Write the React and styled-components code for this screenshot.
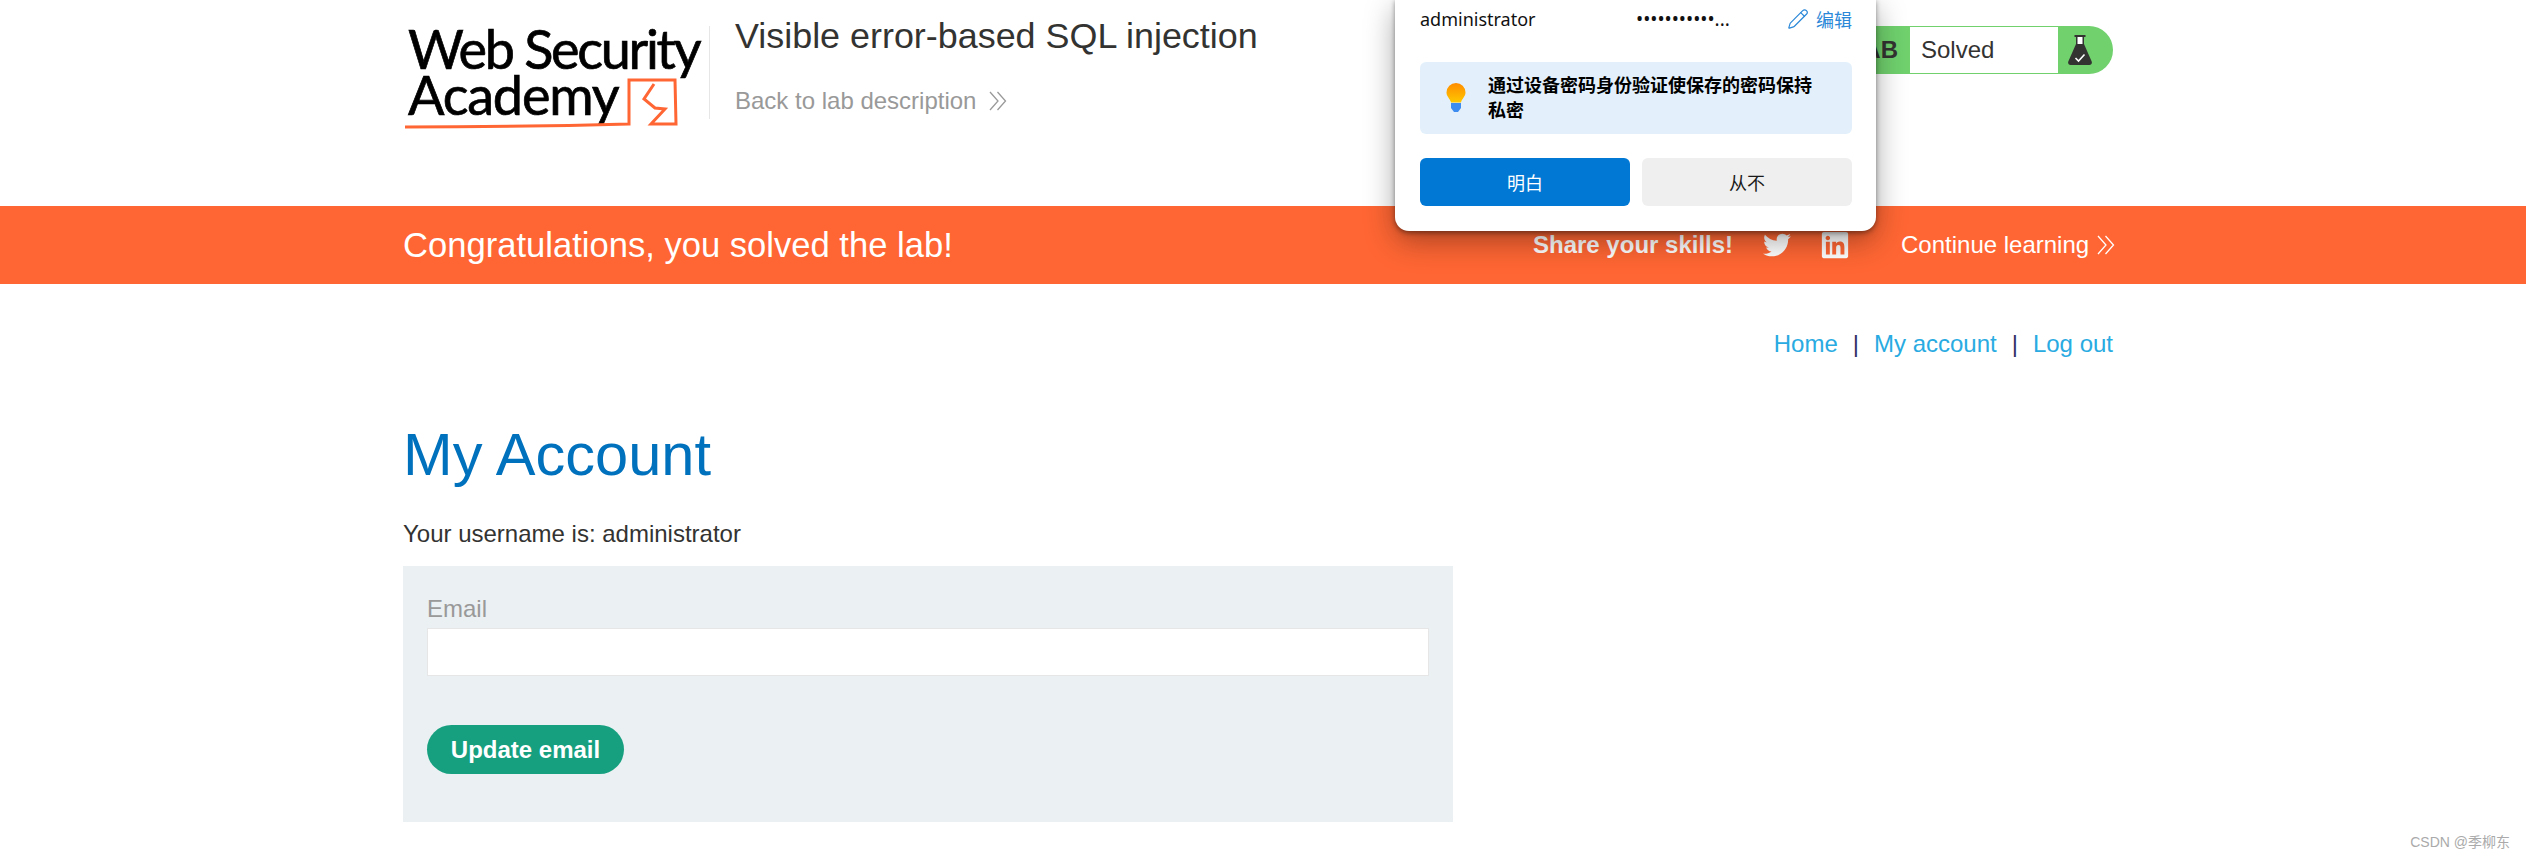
import React from "react";
import styled, { createGlobalStyle } from "styled-components";
import { Pencil } from "lucide-react";
import { FaTwitter, FaLinkedin } from "react-icons/fa";

const GlobalStyle = createGlobalStyle`
  html, body {
    margin: 0;
    padding: 0;
    background: #fff;
    overflow: hidden;
  }
  body {
    font-family: "Liberation Sans", Arial, sans-serif;
    color: #333332;
  }
`;

const Page = styled.div`
  position: relative;
  width: 2526px;
  height: 859px;
  overflow: hidden;
`;

const Header = styled.header`
  display: flex;
  align-items: flex-start;
  width: 1710px;
  height: 206px;
  margin-left: 403px;
  box-sizing: border-box;
`;

const Logo = styled.div`
  position: relative;
  width: 306px;
  height: 93px;
  margin-top: 26px;
  border-right: 1px solid #e6e6e6;
  font-family: "Lato", sans-serif;
  color: #000;
`;

const LogoLine = styled.div`
  padding-left: ${props => props.$indent}px;
  font-size: ${props => props.$size}px;
  line-height: 46px;
  height: 46px;
  font-weight: 400;
  letter-spacing: ${props => props.$spacing}px;
  -webkit-text-stroke: 0.7px #000;
  white-space: nowrap;
`;

const LogoMark = styled.svg`
  position: absolute;
  left: 1px;
  top: 49px;
  width: 280px;
  height: 56px;
`;

const TitleBlock = styled.div`
  margin-left: 25px;
  padding-top: 15px;
`;

const LabTitle = styled.h2`
  margin: 0;
  font-size: 35.9px;
  line-height: 42px;
  font-weight: 400;
  color: #333332;
`;

const BackLink = styled.a`
  display: flex;
  align-items: center;
  gap: 13px;
  margin-top: 29px;
  font-size: 24px;
  line-height: 30px;
  color: #999;
`;

const StatusPill = styled.div`
  display: flex;
  align-items: center;
  margin-left: auto;
  margin-top: 26px;
  height: 48px;
  background: #70d16d;
  border-radius: 0 24px 24px 0;
`;

const StatusLabel = styled.span`
  padding: 0 12px 0 14px;
  font-size: 24px;
  font-weight: 700;
  color: #333332;
`;

const StatusValue = styled.div`
  display: flex;
  align-items: center;
  box-sizing: border-box;
  width: 148px;
  height: 46px;
  padding-left: 11px;
  background: #fff;
  font-size: 24px;
  color: #333332;
`;

const FlaskBox = styled.div`
  display: flex;
  align-items: center;
  width: 55px;
  padding-left: 10px;
  box-sizing: border-box;
`;

const Banner = styled.section`
  display: flex;
  align-items: center;
  box-sizing: border-box;
  width: 100%;
  height: 78px;
  padding-left: 403px;
  background: #ff6633;
  color: #fff;
`;

const BannerTitle = styled.h4`
  margin: 0;
  width: 1130px;
  font-size: 34.6px;
  font-weight: 400;
`;

const Share = styled.div`
  display: flex;
  align-items: center;
  width: 368px;
  font-size: 24px;
  font-weight: 700;
`;

const SocialIcon = styled.span`
  display: flex;
  margin-left: ${props => props.$gap}px;
  font-size: ${props => props.$size}px;
`;

const ContinueLink = styled.a`
  display: flex;
  align-items: center;
  gap: 8px;
  font-size: 24px;
  color: #fff;
`;

const Main = styled.main`
  width: 1710px;
  margin-left: 403px;
`;

const TopNav = styled.nav`
  display: flex;
  justify-content: flex-end;
  align-items: center;
  gap: 15px;
  height: 30px;
  margin-top: 45px;
  font-size: 24px;
`;

const NavLink = styled.a`
  color: #29abe2;
`;

const NavSep = styled.span`
  color: #333366;
`;

const Heading = styled.h1`
  margin: 61px 0 0;
  font-size: 59.6px;
  line-height: 70px;
  font-weight: 400;
  color: #0071bc;
`;

const Username = styled.p`
  margin: 29px 0 0;
  font-size: 24px;
  line-height: 30px;
  color: #333332;
`;

const FormBox = styled.form`
  box-sizing: border-box;
  width: 1050px;
  height: 256px;
  margin-top: 17px;
  padding: 29px 24px 0;
  background: #ebf0f2;
`;

const FieldLabel = styled.label`
  display: block;
  font-size: 24px;
  line-height: 27px;
  color: #999;
`;

const TextInput = styled.input`
  display: block;
  box-sizing: border-box;
  width: 100%;
  height: 48px;
  margin: 6px 0 49px;
  border: 1px solid #e6e6e6;
  background: #fff;
  outline: none;
`;

const SubmitButton = styled.button`
  display: block;
  width: 197px;
  height: 49px;
  border: 0;
  border-radius: 25px;
  background: #16a07f;
  color: #fff;
  font-family: "Liberation Sans", Arial, sans-serif;
  font-size: 24px;
  font-weight: 700;
`;

const Popup = styled.div`
  position: absolute;
  left: 1395px;
  top: -1px;
  box-sizing: border-box;
  width: 481px;
  height: 232px;
  padding: 1px 24px 0 25px;
  background: #fff;
  border-radius: 0 0 14px 14px;
  box-shadow: 0 2px 5px rgba(0, 0, 0, 0.4), 0 10px 30px rgba(0, 0, 0, 0.35);
  font-family: "Noto Sans", "Noto Sans CJK SC", sans-serif;
  color: #111;
`;

const CredentialRow = styled.div`
  display: flex;
  align-items: center;
  height: 38px;
  font-size: 18px;
`;

const CredentialName = styled.span`
  width: 216px;
`;

const CredentialDots = styled.span`
  width: 150px;
  font-size: 19px;
  letter-spacing: 0;
`;

const EditLink = styled.a`
  display: flex;
  align-items: center;
  gap: 7px;
  margin-left: auto;
  color: #2b88d8;
  font-size: 18px;
`;

const InfoBox = styled.div`
  display: flex;
  align-items: center;
  box-sizing: border-box;
  height: 72px;
  margin-top: 24px;
  padding: 0 12px 0 26px;
  background: #e3f0fb;
  border-radius: 6px;
`;

const InfoText = styled.p`
  width: 330px;
  margin: 0 0 0 22px;
  font-size: 18px;
  line-height: 25px;
  font-weight: 700;
  color: #000;
`;

const ButtonRow = styled.div`
  display: grid;
  grid-template-columns: 1fr 1fr;
  gap: 12px;
  margin-top: 24px;
`;

const PopupButton = styled.button`
  height: 48px;
  border: 0;
  border-radius: 6px;
  background: ${props => (props.$primary ? "#0078d4" : "#efefef")};
  color: ${props => (props.$primary ? "#fff" : "#1a1a1a")};
  font-family: "Noto Sans CJK SC", sans-serif;
  font-size: 18px;
`;

const Watermark = styled.div`
  position: absolute;
  right: 16px;
  bottom: 8px;
  font-family: "Liberation Sans", "Noto Sans CJK SC", sans-serif;
  font-size: 14px;
  color: #aaa;
`;

function DoubleChevron({ size = 18 }) {
  return (
    <svg width={size} height={size + 2} viewBox="0 0 18 20" fill="none" stroke="currentColor" strokeWidth="1.3">
      <path d="M1 1l8 9-8 9" />
      <path d="M8.500 1l8 9-8 9" />
    </svg>
  );
}

function FlaskIcon() {
  return (
    <svg width="24" height="30" viewBox="0 0 24 30">
      <path d="M6.500 0h11v2H16v7l7.700 17.500c.7 1.700-.5 3.500-2.200 3.500h-19C.8 30-.4 28.200.3 26.500L8 9V2H6.500z" fill="#333332" />
      <path d="M9.500 2h5v7h-5z" fill="#fff" />
      <path d="M7.500 23l3 3 6-6.500" fill="none" stroke="#fff" strokeWidth="1.600" />
    </svg>
  );
}

function BulbIcon() {
  return (
    <svg width="20" height="30" viewBox="0 0 20 30">
      <defs>
        <linearGradient id="bulbFill" x1="0" y1="0" x2="0" y2="1">
          <stop offset="0" stopColor="#ff8c00" />
          <stop offset="1" stopColor="#ffc800" />
        </linearGradient>
      </defs>
      <path d="M10 0a9.500 9.500 0 0 1 9.500 9.500c0 4-3.500 6-4.500 10H5c-1-4-4.500-6-4.500-10A9.500 9.500 0 0 1 10 0z" fill="url(#bulbFill)" />
      <path d="M5 20h10v5l-3 4H8l-3-4z" fill="#3f8cf0" />
    </svg>
  );
}

export default function App() {
  return (
    <Page>
      <GlobalStyle />
      <Header>
        <Logo>
          <LogoLine $size={54} $spacing={-2.3} $indent={5}>Web Security</LogoLine>
          <LogoLine $size={54} $spacing={-1.2} $indent={5}>Academy</LogoLine>
          <LogoMark viewBox="0 0 280 56" fill="none" stroke="#ff6633" strokeWidth="3">
            <path d="M1 52c70 0 150-1 224-3V5h46l1 44h-25l14-15-10-1-11-9 10-15" />
          </LogoMark>
        </Logo>
        <TitleBlock>
          <LabTitle>Visible error-based SQL injection</LabTitle>
          <BackLink>
            Back to lab description
            <DoubleChevron />
          </BackLink>
        </TitleBlock>
        <StatusPill>
          <StatusLabel>LAB</StatusLabel>
          <StatusValue>Solved</StatusValue>
          <FlaskBox>
            <FlaskIcon />
          </FlaskBox>
        </StatusPill>
      </Header>

      <Banner>
        <BannerTitle>Congratulations, you solved the lab!</BannerTitle>
        <Share>
          Share your skills!
          <SocialIcon $gap={30} $size={28}><FaTwitter /></SocialIcon>
          <SocialIcon $gap={29} $size={30}><FaLinkedin /></SocialIcon>
        </Share>
        <ContinueLink>
          Continue learning
          <DoubleChevron size={18} />
        </ContinueLink>
      </Banner>

      <Main>
        <TopNav>
          <NavLink>Home</NavLink>
          <NavSep>|</NavSep>
          <NavLink>My account</NavLink>
          <NavSep>|</NavSep>
          <NavLink>Log out</NavLink>
        </TopNav>
        <Heading>My Account</Heading>
        <Username>Your username is: administrator</Username>
        <FormBox>
          <FieldLabel>Email</FieldLabel>
          <TextInput type="email" />
          <SubmitButton type="button">Update email</SubmitButton>
        </FormBox>
      </Main>

      <Popup>
        <CredentialRow>
          <CredentialName>administrator</CredentialName>
          <CredentialDots>•••••••••••...</CredentialDots>
          <EditLink>
            <Pencil size={22} strokeWidth={1.3} />
            编辑
          </EditLink>
        </CredentialRow>
        <InfoBox>
          <BulbIcon />
          <InfoText>通过设备密码身份验证使保存的密码保持私密</InfoText>
        </InfoBox>
        <ButtonRow>
          <PopupButton $primary>明白</PopupButton>
          <PopupButton>从不</PopupButton>
        </ButtonRow>
      </Popup>

      <Watermark>CSDN @季柳东</Watermark>
    </Page>
  );
}
